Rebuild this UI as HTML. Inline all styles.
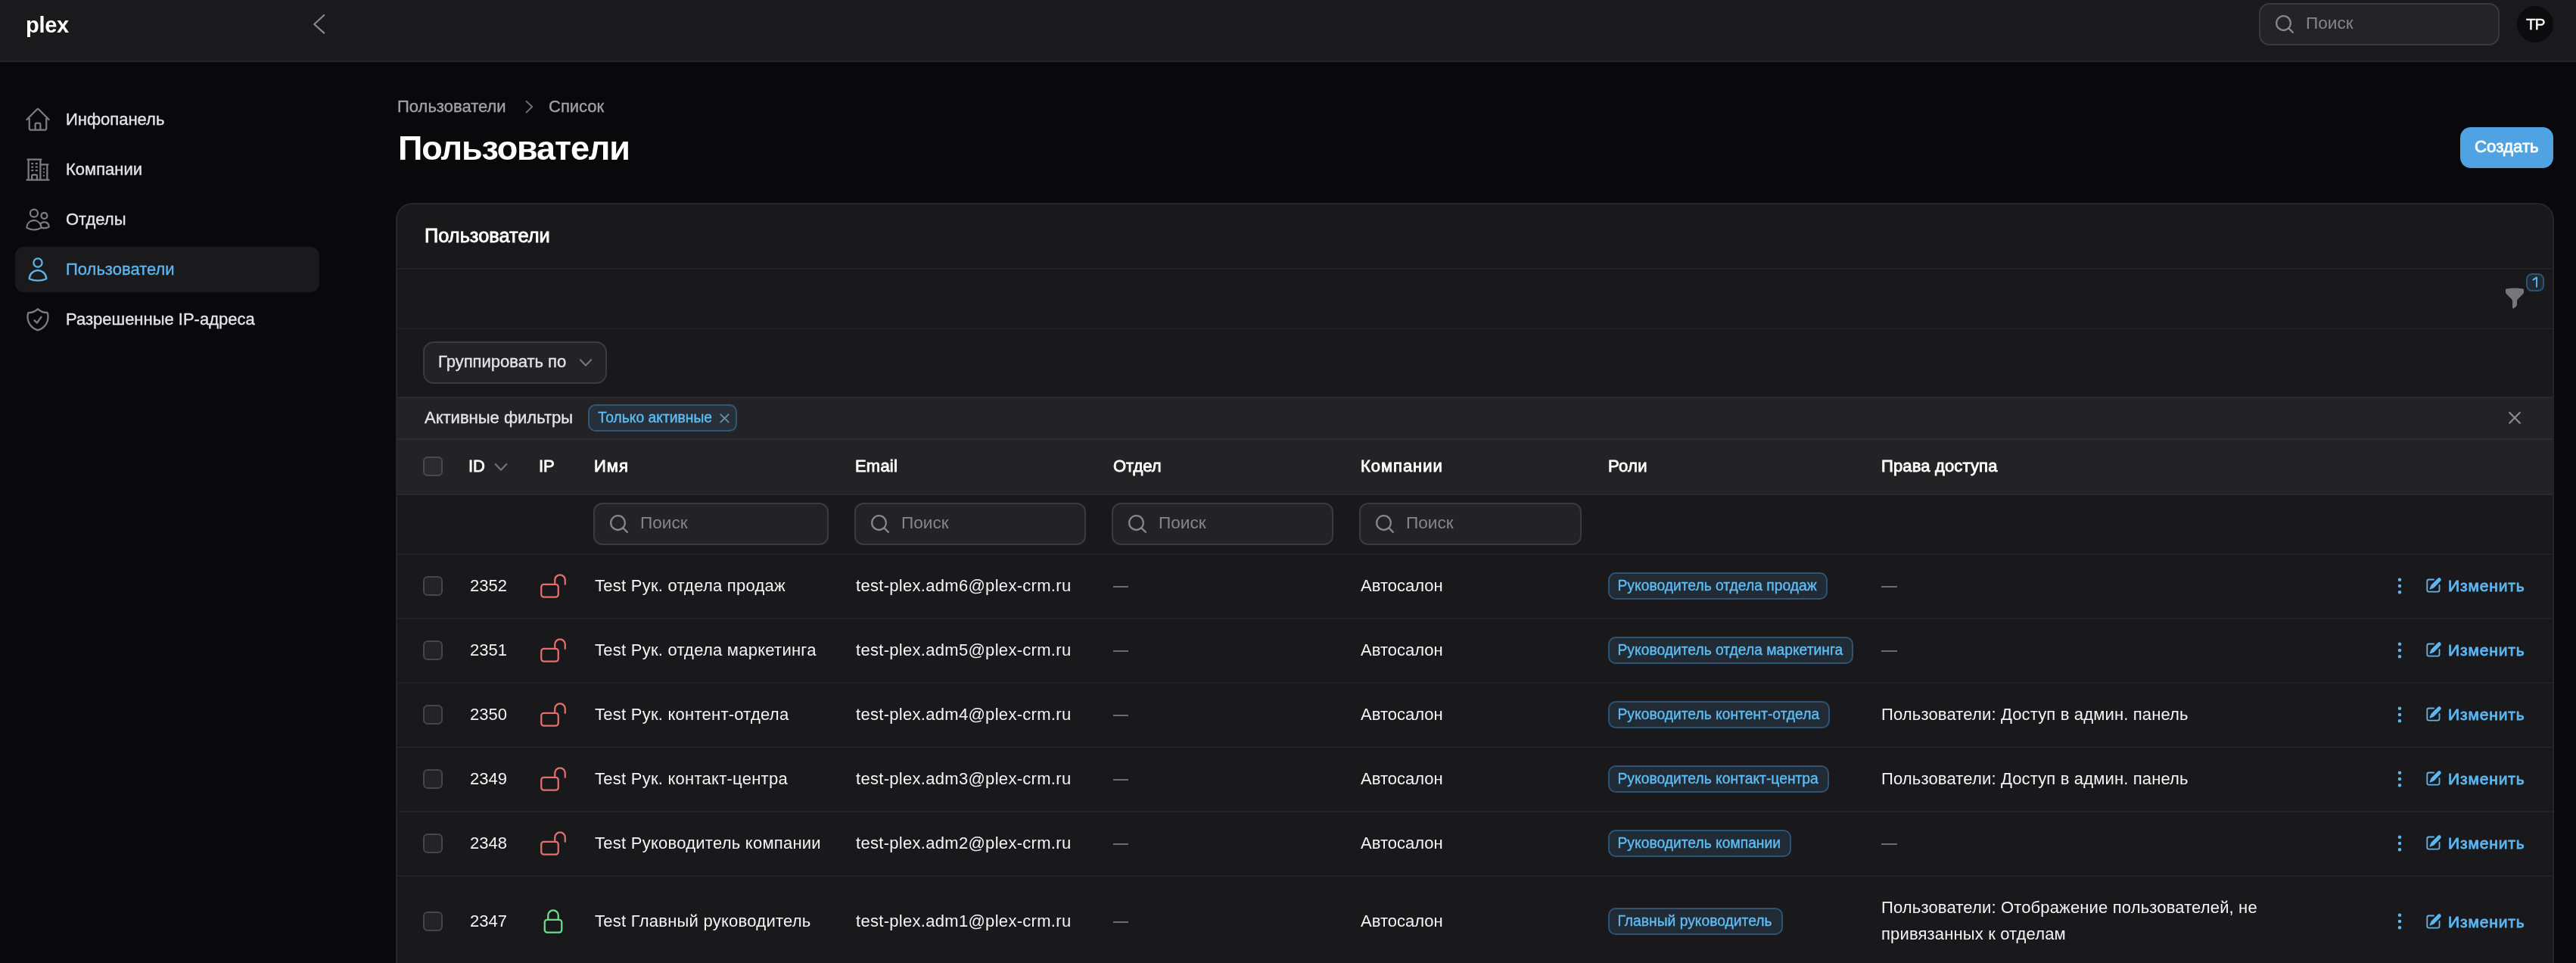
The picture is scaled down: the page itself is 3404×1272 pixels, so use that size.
<!DOCTYPE html><html><head><meta charset="utf-8"><title>Пользователи</title><style>
html,body{margin:0;padding:0;}body{width:3404px;height:1272px;overflow:hidden;position:relative;background:#09090b;font-family:"Liberation Sans", sans-serif;}
.t{position:absolute;white-space:nowrap;-webkit-font-smoothing:antialiased;will-change:transform;}.m{-webkit-text-stroke-width:0.35px}.sb{-webkit-text-stroke-width:0.8px}.r{position:absolute;box-sizing:border-box;}svg.r{overflow:visible}
</style></head><body>
<div class="r" style="left:0px;top:0px;width:3404.00px;height:80.00px;background:#1a1a1d;"></div>
<div class="r" style="left:0px;top:80px;width:3404.00px;height:2.00px;background:#232326;"></div>
<div class="t " style="left:34px;top:18.55px;font-size:29px;line-height:29px;color:#fff;font-weight:700;letter-spacing:-0.3px;">plex</div>
<svg class="r" style="left:390px;top:0px;" width="80" height="80" viewBox="0 0 80 80"><path d="M428.2 20 415.3 32 428.2 43.6" fill="none" stroke="#86868c" stroke-width="2.3" stroke-linecap="round" stroke-linejoin="round" transform="translate(-390 0)"/></svg>
<div class="r" style="left:2985px;top:4px;width:318.00px;height:56.00px;background:#242427;border:2px solid #3a3a3e;border-radius:14px;"></div>
<svg class="r" style="left:3004px;top:17px;" width="30" height="30" viewBox="0 0 20 20"><path d="M9 3.5a5.5 5.5 0 1 0 0 11 5.5 5.5 0 0 0 0-11ZM2 9a7 7 0 1 1 12.452 4.391l3.328 3.329a.75.75 0 1 1-1.06 1.06l-3.329-3.328A7 7 0 0 1 2 9Z" fill="#86868c" fill-rule="evenodd" clip-rule="evenodd"/></svg>
<div class="t " style="left:3046.8px;top:19.79px;font-size:22.6px;line-height:22.6px;color:#85858c;font-weight:400;">Поиск</div>
<div class="r" style="left:3326px;top:8px;width:48.00px;height:48.00px;background:#0c0c0e;border-radius:50%;"></div>
<div class="t m" style="left:3337.5px;top:21.05px;font-size:21px;line-height:21px;color:#fff;font-weight:400;letter-spacing:-1.3px;">TP</div>
<div class="r" style="left:20px;top:326px;width:402.00px;height:59.50px;background:#1a1a1d;border-radius:12px;"></div>
<svg class="r" style="left:32px;top:140.4px;" width="36" height="36" viewBox="0 0 24 24"><path d="m2.25 12 8.954-8.955c.44-.439 1.152-.439 1.591 0L21.75 12M4.5 9.75v10.125c0 .621.504 1.125 1.125 1.125H9.75v-4.875c0-.621.504-1.125 1.125-1.125h2.25c.621 0 1.125.504 1.125 1.125V21h4.125c.621 0 1.125-.504 1.125-1.125V9.75M8.25 21h8.25" fill="none" stroke="#7c7c82" stroke-width="1.5" stroke-linecap="round" stroke-linejoin="round"/></svg>
<div class="t m" style="left:86.9px;top:146.60px;font-size:22px;line-height:22px;color:#e4e4e7;font-weight:400;">Инфопанель</div>
<svg class="r" style="left:32px;top:206.4px;" width="36" height="36" viewBox="0 0 24 24"><path d="M2.25 21h19.5m-18-18v18m10.5-18v18m6-13.5V21M6.75 6.75h.75m-.75 3h.75m-.75 3h.75m3-6h.75m-.75 3h.75m-.75 3h.75M6.75 21v-3.375c0-.621.504-1.125 1.125-1.125h2.25c.621 0 1.125.504 1.125 1.125V21M3 3h12m-.75 4.5H21m-3.75 3.75h.008v.008h-.008v-.008Zm0 3h.008v.008h-.008v-.008Zm0 3h.008v.008h-.008v-.008Z" fill="none" stroke="#7c7c82" stroke-width="1.5" stroke-linecap="round" stroke-linejoin="round"/></svg>
<div class="t m" style="left:86.9px;top:212.60px;font-size:22px;line-height:22px;color:#e4e4e7;font-weight:400;">Компании</div>
<svg class="r" style="left:32px;top:272.4px;" width="36" height="36" viewBox="0 0 24 24"><path d="M15 19.128a9.38 9.38 0 0 0 2.625.372 9.337 9.337 0 0 0 4.121-.952 4.125 4.125 0 0 0-7.533-2.493M15 19.128v-.003c0-1.113-.285-2.16-.786-3.07M15 19.128v.106A12.318 12.318 0 0 1 8.624 21c-2.331 0-4.512-.645-6.374-1.766l-.001-.109a6.375 6.375 0 0 1 11.964-3.07M12 6.375a3.375 3.375 0 1 1-6.75 0 3.375 3.375 0 0 1 6.75 0Zm8.25 2.25a2.625 2.625 0 1 1-5.25 0 2.625 2.625 0 0 1 5.25 0Z" fill="none" stroke="#7c7c82" stroke-width="1.5" stroke-linecap="round" stroke-linejoin="round"/></svg>
<div class="t m" style="left:86.9px;top:278.60px;font-size:22px;line-height:22px;color:#e4e4e7;font-weight:400;">Отделы</div>
<svg class="r" style="left:32px;top:338.4px;" width="36" height="36" viewBox="0 0 24 24"><path d="M15.75 6a3.75 3.75 0 1 1-7.5 0 3.75 3.75 0 0 1 7.5 0ZM4.501 20.118a7.5 7.5 0 0 1 14.998 0A17.933 17.933 0 0 1 12 21.75c-2.676 0-5.216-.584-7.499-1.632Z" fill="none" stroke="#5cb6f2" stroke-width="1.5" stroke-linecap="round" stroke-linejoin="round"/></svg>
<div class="t m" style="left:86.9px;top:344.60px;font-size:22px;line-height:22px;color:#5cb6f2;font-weight:400;">Пользователи</div>
<svg class="r" style="left:32px;top:404.4px;" width="36" height="36" viewBox="0 0 24 24"><path d="M9 12.75 11.25 15 15 9.75m-3-7.036A11.959 11.959 0 0 1 3.598 6 11.99 11.99 0 0 0 3 9.749c0 5.592 3.824 10.29 9 11.623 5.176-1.332 9-6.03 9-11.622 0-1.31-.21-2.571-.598-3.751h-.152c-3.196 0-6.1-1.248-8.25-3.285Z" fill="none" stroke="#7c7c82" stroke-width="1.5" stroke-linecap="round" stroke-linejoin="round"/></svg>
<div class="t m" style="left:86.9px;top:410.60px;font-size:22px;line-height:22px;color:#e4e4e7;font-weight:400;">Разрешенные IP-адреса</div>
<div class="t m" style="left:524.8px;top:129.50px;font-size:22px;line-height:22px;color:#a1a1aa;font-weight:400;">Пользователи</div>
<svg class="r" style="left:690px;top:130px;" width="20" height="20" viewBox="0 0 20 20"><path d="M695.5 133.8 703.2 141.1 695.5 148.4" fill="none" stroke="#6e6e74" stroke-width="2" stroke-linecap="round" stroke-linejoin="round" transform="translate(-690 -130)"/></svg>
<div class="t m" style="left:725px;top:129.50px;font-size:22px;line-height:22px;color:#a1a1aa;font-weight:400;">Список</div>
<div class="t " style="left:526.2px;top:172.95px;font-size:45px;line-height:45px;color:#fff;font-weight:700;letter-spacing:-1.1px;">Пользователи</div>
<div class="r" style="left:3251px;top:168px;width:123.00px;height:54.00px;background:#4fa3e3;border-radius:14px;"></div>
<div class="t sb" style="left:3270px;top:183.04px;font-size:22.3px;line-height:22.3px;color:#fff;font-weight:400;">Создать</div>
<div class="r" style="left:523px;top:268px;width:2852.00px;height:1032.00px;background:#19191c;border:2px solid #262629;border-radius:22px;"></div>
<div class="t sb" style="left:561px;top:298.71px;font-size:25.4px;line-height:25.4px;color:#fff;font-weight:400;">Пользователи</div>
<div class="r" style="left:525px;top:353.5px;width:2848.00px;height:2.00px;background:#222225;"></div>
<svg class="r" style="left:3308px;top:379px;" width="30" height="30" viewBox="0 0 20 20"><path d="M2.628 1.601C5.028 1.206 7.49 1 10 1s4.973.206 7.372.601a.75.75 0 0 1 .628.74v2.288a2.25 2.25 0 0 1-.659 1.59l-4.682 4.683a2.25 2.25 0 0 0-.659 1.59v3.037c0 .684-.31 1.33-.844 1.757l-1.937 1.55A.75.75 0 0 1 8 18.25v-5.757a2.25 2.25 0 0 0-.659-1.591L2.659 6.22A2.25 2.25 0 0 1 2 4.629V2.34a.75.75 0 0 1 .628-.74Z" fill="#76767c" fill-rule="evenodd" clip-rule="evenodd"/></svg>
<div class="r" style="left:3338px;top:361px;width:24.00px;height:24.00px;background:#1e2a34;border:2px solid #2c5372;border-radius:8px;"></div>
<svg class="r" style="left:3340px;top:362px;" width="20" height="20" viewBox="0 0 20 20"><path d="M3352 378.8V366.4L3347.4 369.6" fill="none" stroke="#5cb6f2" stroke-width="1.9" stroke-linecap="round" stroke-linejoin="round" transform="translate(-3340 -362)"/></svg>
<div class="r" style="left:525px;top:432.5px;width:2848.00px;height:2.00px;background:#222225;"></div>
<div class="r" style="left:558.7px;top:450.8px;width:243.30px;height:56.50px;background:#232326;border:2px solid #3b3b3f;border-radius:14px;"></div>
<div class="t m" style="left:578.7px;top:467.10px;font-size:22px;line-height:22px;color:#e4e4e7;font-weight:400;">Группировать по</div>
<svg class="r" style="left:760px;top:470px;" width="20" height="20" viewBox="0 0 20 20"><path d="M766.8 475.2 774 482.8 781.2 475.2" fill="none" stroke="#76767c" stroke-width="2" stroke-linecap="round" stroke-linejoin="round" transform="translate(-760 -470)"/></svg>
<div class="r" style="left:525px;top:524px;width:2848.00px;height:2.00px;background:#29292c;"></div>
<div class="r" style="left:525px;top:526px;width:2848.00px;height:53.00px;background:#232326;"></div>
<div class="t m" style="left:560.6px;top:540.60px;font-size:22px;line-height:22px;color:#e4e4e7;font-weight:400;">Активные фильтры</div>
<div class="r" style="left:777.3px;top:534px;width:196.70px;height:36.00px;background:#25303a;border:2px solid #2f5878;border-radius:10px;"></div>
<div class="t m" style="left:789.5px;top:541.50px;font-size:19.3px;line-height:19.3px;color:#5fbdf5;font-weight:400;">Только активные</div>
<svg class="r" style="left:948px;top:543px;" width="20" height="20" viewBox="0 0 20 20"><path d="M952.3 547.3 962.7 557.7M962.7 547.3 952.3 557.7" fill="none" stroke="#6d8fa6" stroke-width="1.8" stroke-linecap="round" transform="translate(-948 -543)"/></svg>
<svg class="r" style="left:3310px;top:540px;" width="24" height="24" viewBox="0 0 24 24"><path d="M3316.2 545 3329.8 558.8M3329.8 545 3316.2 558.8" fill="none" stroke="#88888e" stroke-width="2.3" stroke-linecap="round" transform="translate(-3310 -540)"/></svg>
<div class="r" style="left:525px;top:578.5px;width:2848.00px;height:2.00px;background:#2d2d30;"></div>
<div class="r" style="left:525px;top:580.5px;width:2848.00px;height:71.50px;background:#232326;"></div>
<div class="r" style="left:558.6px;top:602.8px;width:26.60px;height:26.50px;background:#2c2c2f;border:2px solid #4a4a4e;border-radius:6px;"></div>
<div class="t sb" style="left:619.2px;top:604.80px;font-size:22px;line-height:22px;color:#fff;font-weight:400;">ID</div>
<div class="t sb" style="left:712.2px;top:604.80px;font-size:22px;line-height:22px;color:#fff;font-weight:400;">IP</div>
<div class="t sb" style="left:784.5px;top:604.80px;font-size:22px;line-height:22px;color:#fff;font-weight:400;letter-spacing:1.0px;">Имя</div>
<div class="t sb" style="left:1130px;top:604.80px;font-size:22px;line-height:22px;color:#fff;font-weight:400;letter-spacing:0.2px;">Email</div>
<div class="t sb" style="left:1471.1px;top:604.80px;font-size:22px;line-height:22px;color:#fff;font-weight:400;">Отдел</div>
<div class="t sb" style="left:1797.5px;top:604.80px;font-size:22px;line-height:22px;color:#fff;font-weight:400;letter-spacing:0.95px;">Компании</div>
<div class="t sb" style="left:2125px;top:604.80px;font-size:22px;line-height:22px;color:#fff;font-weight:400;letter-spacing:0.3px;">Роли</div>
<div class="t sb" style="left:2486px;top:604.80px;font-size:22px;line-height:22px;color:#fff;font-weight:400;letter-spacing:0.15px;">Права доступа</div>
<svg class="r" style="left:650px;top:608px;" width="24" height="24" viewBox="0 0 24 24"><path d="M654.6 613 662 620.8 669.4 613" fill="none" stroke="#76767c" stroke-width="2" stroke-linecap="round" stroke-linejoin="round" transform="translate(-650 -608)"/></svg>
<div class="r" style="left:525px;top:651.5px;width:2848.00px;height:2.00px;background:#29292c;"></div>
<div class="r" style="left:784px;top:664px;width:311.30px;height:56.10px;background:#232326;border:2px solid #3b3b3f;border-radius:12px;"></div>
<svg class="r" style="left:803px;top:677px;" width="30" height="30" viewBox="0 0 20 20"><path d="M9 3.5a5.5 5.5 0 1 0 0 11 5.5 5.5 0 0 0 0-11ZM2 9a7 7 0 1 1 12.452 4.391l3.328 3.329a.75.75 0 1 1-1.06 1.06l-3.329-3.328A7 7 0 0 1 2 9Z" fill="#86868c" fill-rule="evenodd" clip-rule="evenodd"/></svg>
<div class="t " style="left:846px;top:679.89px;font-size:22.6px;line-height:22.6px;color:#85858c;font-weight:400;">Поиск</div>
<div class="r" style="left:1128.8px;top:664px;width:306.00px;height:56.10px;background:#232326;border:2px solid #3b3b3f;border-radius:12px;"></div>
<svg class="r" style="left:1147.8px;top:677px;" width="30" height="30" viewBox="0 0 20 20"><path d="M9 3.5a5.5 5.5 0 1 0 0 11 5.5 5.5 0 0 0 0-11ZM2 9a7 7 0 1 1 12.452 4.391l3.328 3.329a.75.75 0 1 1-1.06 1.06l-3.329-3.328A7 7 0 0 1 2 9Z" fill="#86868c" fill-rule="evenodd" clip-rule="evenodd"/></svg>
<div class="t " style="left:1190.8px;top:679.89px;font-size:22.6px;line-height:22.6px;color:#85858c;font-weight:400;">Поиск</div>
<div class="r" style="left:1469px;top:664px;width:292.50px;height:56.10px;background:#232326;border:2px solid #3b3b3f;border-radius:12px;"></div>
<svg class="r" style="left:1488px;top:677px;" width="30" height="30" viewBox="0 0 20 20"><path d="M9 3.5a5.5 5.5 0 1 0 0 11 5.5 5.5 0 0 0 0-11ZM2 9a7 7 0 1 1 12.452 4.391l3.328 3.329a.75.75 0 1 1-1.06 1.06l-3.329-3.328A7 7 0 0 1 2 9Z" fill="#86868c" fill-rule="evenodd" clip-rule="evenodd"/></svg>
<div class="t " style="left:1531px;top:679.89px;font-size:22.6px;line-height:22.6px;color:#85858c;font-weight:400;">Поиск</div>
<div class="r" style="left:1795.6px;top:664px;width:294.60px;height:56.10px;background:#232326;border:2px solid #3b3b3f;border-radius:12px;"></div>
<svg class="r" style="left:1814.6px;top:677px;" width="30" height="30" viewBox="0 0 20 20"><path d="M9 3.5a5.5 5.5 0 1 0 0 11 5.5 5.5 0 0 0 0-11ZM2 9a7 7 0 1 1 12.452 4.391l3.328 3.329a.75.75 0 1 1-1.06 1.06l-3.329-3.328A7 7 0 0 1 2 9Z" fill="#86868c" fill-rule="evenodd" clip-rule="evenodd"/></svg>
<div class="t " style="left:1857.6px;top:679.89px;font-size:22.6px;line-height:22.6px;color:#85858c;font-weight:400;">Поиск</div>
<div class="r" style="left:525px;top:730.5px;width:2848.00px;height:2.00px;background:#222225;"></div>
<div class="r" style="left:558.8px;top:760.7px;width:26.00px;height:26.00px;background:#242427;border:2px solid #46464a;border-radius:6px;"></div>
<div class="t " style="left:620.7px;top:762.60px;font-size:22px;line-height:22px;color:#f4f4f5;font-weight:400;">2352</div>
<svg class="r" style="left:713px;top:755.7px;" width="36" height="36" viewBox="0 0 24 24"><path d="M13.5 10.5V6.75a4.5 4.5 0 1 1 9 0v3.75M3.75 21.75h10.5a2.25 2.25 0 0 0 2.25-2.25v-6.75a2.25 2.25 0 0 0-2.25-2.25H3.75a2.25 2.25 0 0 0-2.25 2.25v6.75a2.25 2.25 0 0 0 2.25 2.25Z" fill="none" stroke="#e3706f" stroke-width="1.5" stroke-linecap="round" stroke-linejoin="round"/></svg>
<div class="t " style="left:786.3px;top:762.60px;font-size:22px;line-height:22px;color:#f4f4f5;font-weight:400;letter-spacing:0.25px;">Test Рук. отдела продаж</div>
<div class="t " style="left:1131px;top:762.60px;font-size:22px;line-height:22px;color:#f4f4f5;font-weight:400;letter-spacing:0.3px;">test-plex.adm6@plex-crm.ru</div>
<div class="r" style="left:1470.6px;top:773.7px;width:20.60px;height:2.00px;background:#6b6b70;"></div>
<div class="t " style="left:1798px;top:762.60px;font-size:22px;line-height:22px;color:#f4f4f5;font-weight:400;">Автосалон</div>
<div class="r" style="left:2125.2px;top:755.90px;height:35.6px;padding:0 12px 0 10.5px;background:#202b35;border:2px solid #2e5373;border-radius:10px;font-size:19.3px;line-height:31.6px;color:#5fbdf5;white-space:nowrap;-webkit-text-stroke-width:0.35px;will-change:transform;">Руководитель отдела продаж</div>
<div class="r" style="left:2486.2px;top:773.7px;width:20.60px;height:2.00px;background:#6b6b70;"></div>
<svg class="r" style="left:3156px;top:758.7px;" width="30" height="30" viewBox="0 0 20 20"><path d="M10 3a1.5 1.5 0 1 1 0 3 1.5 1.5 0 0 1 0-3ZM10 8.5a1.5 1.5 0 1 1 0 3 1.5 1.5 0 0 1 0-3ZM11.5 15.5a1.5 1.5 0 1 0-3 0 1.5 1.5 0 0 0 3 0Z" fill="#5cb6f2" fill-rule="evenodd" clip-rule="evenodd"/></svg>
<svg class="r" style="left:3203.9px;top:761.3000000000001px;" width="24" height="24" viewBox="0 0 20 20"><path d="m5.433 13.917 1.262-3.155A4 4 0 0 1 7.58 9.42l6.92-6.918a2.121 2.121 0 0 1 3 3l-6.92 6.918c-.383.383-.84.685-1.343.886l-3.154 1.262a.5.5 0 0 1-.65-.65Z" fill="#5cb6f2"/><path d="M3.5 5.75c0-.69.56-1.25 1.25-1.25H10A.75.75 0 0 0 10 3H4.75A2.75 2.75 0 0 0 2 5.75v9.5A2.75 2.75 0 0 0 4.75 18h9.5A2.75 2.75 0 0 0 17 15.25V10a.75.75 0 0 0-1.5 0v5.25c0 .69-.56 1.25-1.25 1.25h-9.5c-.69 0-1.25-.56-1.25-1.25v-9.5Z" fill="#5cb6f2"/></svg>
<div class="t sb" style="left:3235px;top:763.45px;font-size:21px;line-height:21px;color:#5cb6f2;font-weight:400;letter-spacing:0.85px;">Изменить</div>
<div class="r" style="left:525px;top:815.5px;width:2848.00px;height:2.00px;background:#222225;"></div>
<div class="r" style="left:558.8px;top:845.7px;width:26.00px;height:26.00px;background:#242427;border:2px solid #46464a;border-radius:6px;"></div>
<div class="t " style="left:620.7px;top:847.60px;font-size:22px;line-height:22px;color:#f4f4f5;font-weight:400;">2351</div>
<svg class="r" style="left:713px;top:840.7px;" width="36" height="36" viewBox="0 0 24 24"><path d="M13.5 10.5V6.75a4.5 4.5 0 1 1 9 0v3.75M3.75 21.75h10.5a2.25 2.25 0 0 0 2.25-2.25v-6.75a2.25 2.25 0 0 0-2.25-2.25H3.75a2.25 2.25 0 0 0-2.25 2.25v6.75a2.25 2.25 0 0 0 2.25 2.25Z" fill="none" stroke="#e3706f" stroke-width="1.5" stroke-linecap="round" stroke-linejoin="round"/></svg>
<div class="t " style="left:786.3px;top:847.60px;font-size:22px;line-height:22px;color:#f4f4f5;font-weight:400;letter-spacing:0.25px;">Test Рук. отдела маркетинга</div>
<div class="t " style="left:1131px;top:847.60px;font-size:22px;line-height:22px;color:#f4f4f5;font-weight:400;letter-spacing:0.3px;">test-plex.adm5@plex-crm.ru</div>
<div class="r" style="left:1470.6px;top:858.7px;width:20.60px;height:2.00px;background:#6b6b70;"></div>
<div class="t " style="left:1798px;top:847.60px;font-size:22px;line-height:22px;color:#f4f4f5;font-weight:400;">Автосалон</div>
<div class="r" style="left:2125.2px;top:840.90px;height:35.6px;padding:0 12px 0 10.5px;background:#202b35;border:2px solid #2e5373;border-radius:10px;font-size:19.3px;line-height:31.6px;color:#5fbdf5;white-space:nowrap;-webkit-text-stroke-width:0.35px;will-change:transform;">Руководитель отдела маркетинга</div>
<div class="r" style="left:2486.2px;top:858.7px;width:20.60px;height:2.00px;background:#6b6b70;"></div>
<svg class="r" style="left:3156px;top:843.7px;" width="30" height="30" viewBox="0 0 20 20"><path d="M10 3a1.5 1.5 0 1 1 0 3 1.5 1.5 0 0 1 0-3ZM10 8.5a1.5 1.5 0 1 1 0 3 1.5 1.5 0 0 1 0-3ZM11.5 15.5a1.5 1.5 0 1 0-3 0 1.5 1.5 0 0 0 3 0Z" fill="#5cb6f2" fill-rule="evenodd" clip-rule="evenodd"/></svg>
<svg class="r" style="left:3203.9px;top:846.3000000000001px;" width="24" height="24" viewBox="0 0 20 20"><path d="m5.433 13.917 1.262-3.155A4 4 0 0 1 7.58 9.42l6.92-6.918a2.121 2.121 0 0 1 3 3l-6.92 6.918c-.383.383-.84.685-1.343.886l-3.154 1.262a.5.5 0 0 1-.65-.65Z" fill="#5cb6f2"/><path d="M3.5 5.75c0-.69.56-1.25 1.25-1.25H10A.75.75 0 0 0 10 3H4.75A2.75 2.75 0 0 0 2 5.75v9.5A2.75 2.75 0 0 0 4.75 18h9.5A2.75 2.75 0 0 0 17 15.25V10a.75.75 0 0 0-1.5 0v5.25c0 .69-.56 1.25-1.25 1.25h-9.5c-.69 0-1.25-.56-1.25-1.25v-9.5Z" fill="#5cb6f2"/></svg>
<div class="t sb" style="left:3235px;top:848.45px;font-size:21px;line-height:21px;color:#5cb6f2;font-weight:400;letter-spacing:0.85px;">Изменить</div>
<div class="r" style="left:525px;top:900.5px;width:2848.00px;height:2.00px;background:#222225;"></div>
<div class="r" style="left:558.8px;top:930.7px;width:26.00px;height:26.00px;background:#242427;border:2px solid #46464a;border-radius:6px;"></div>
<div class="t " style="left:620.7px;top:932.60px;font-size:22px;line-height:22px;color:#f4f4f5;font-weight:400;">2350</div>
<svg class="r" style="left:713px;top:925.7px;" width="36" height="36" viewBox="0 0 24 24"><path d="M13.5 10.5V6.75a4.5 4.5 0 1 1 9 0v3.75M3.75 21.75h10.5a2.25 2.25 0 0 0 2.25-2.25v-6.75a2.25 2.25 0 0 0-2.25-2.25H3.75a2.25 2.25 0 0 0-2.25 2.25v6.75a2.25 2.25 0 0 0 2.25 2.25Z" fill="none" stroke="#e3706f" stroke-width="1.5" stroke-linecap="round" stroke-linejoin="round"/></svg>
<div class="t " style="left:786.3px;top:932.60px;font-size:22px;line-height:22px;color:#f4f4f5;font-weight:400;letter-spacing:0.25px;">Test Рук. контент-отдела</div>
<div class="t " style="left:1131px;top:932.60px;font-size:22px;line-height:22px;color:#f4f4f5;font-weight:400;letter-spacing:0.3px;">test-plex.adm4@plex-crm.ru</div>
<div class="r" style="left:1470.6px;top:943.7px;width:20.60px;height:2.00px;background:#6b6b70;"></div>
<div class="t " style="left:1798px;top:932.60px;font-size:22px;line-height:22px;color:#f4f4f5;font-weight:400;">Автосалон</div>
<div class="r" style="left:2125.2px;top:925.90px;height:35.6px;padding:0 12px 0 10.5px;background:#202b35;border:2px solid #2e5373;border-radius:10px;font-size:19.3px;line-height:31.6px;color:#5fbdf5;white-space:nowrap;-webkit-text-stroke-width:0.35px;will-change:transform;">Руководитель контент-отдела</div>
<div class="t " style="left:2486.2px;top:932.60px;font-size:22px;line-height:22px;color:#f4f4f5;font-weight:400;letter-spacing:0.15px;">Пользователи: Доступ в админ. панель</div>
<svg class="r" style="left:3156px;top:928.7px;" width="30" height="30" viewBox="0 0 20 20"><path d="M10 3a1.5 1.5 0 1 1 0 3 1.5 1.5 0 0 1 0-3ZM10 8.5a1.5 1.5 0 1 1 0 3 1.5 1.5 0 0 1 0-3ZM11.5 15.5a1.5 1.5 0 1 0-3 0 1.5 1.5 0 0 0 3 0Z" fill="#5cb6f2" fill-rule="evenodd" clip-rule="evenodd"/></svg>
<svg class="r" style="left:3203.9px;top:931.3000000000001px;" width="24" height="24" viewBox="0 0 20 20"><path d="m5.433 13.917 1.262-3.155A4 4 0 0 1 7.58 9.42l6.92-6.918a2.121 2.121 0 0 1 3 3l-6.92 6.918c-.383.383-.84.685-1.343.886l-3.154 1.262a.5.5 0 0 1-.65-.65Z" fill="#5cb6f2"/><path d="M3.5 5.75c0-.69.56-1.25 1.25-1.25H10A.75.75 0 0 0 10 3H4.75A2.75 2.75 0 0 0 2 5.75v9.5A2.75 2.75 0 0 0 4.75 18h9.5A2.75 2.75 0 0 0 17 15.25V10a.75.75 0 0 0-1.5 0v5.25c0 .69-.56 1.25-1.25 1.25h-9.5c-.69 0-1.25-.56-1.25-1.25v-9.5Z" fill="#5cb6f2"/></svg>
<div class="t sb" style="left:3235px;top:933.45px;font-size:21px;line-height:21px;color:#5cb6f2;font-weight:400;letter-spacing:0.85px;">Изменить</div>
<div class="r" style="left:525px;top:985.5px;width:2848.00px;height:2.00px;background:#222225;"></div>
<div class="r" style="left:558.8px;top:1015.7px;width:26.00px;height:26.00px;background:#242427;border:2px solid #46464a;border-radius:6px;"></div>
<div class="t " style="left:620.7px;top:1017.60px;font-size:22px;line-height:22px;color:#f4f4f5;font-weight:400;">2349</div>
<svg class="r" style="left:713px;top:1010.7px;" width="36" height="36" viewBox="0 0 24 24"><path d="M13.5 10.5V6.75a4.5 4.5 0 1 1 9 0v3.75M3.75 21.75h10.5a2.25 2.25 0 0 0 2.25-2.25v-6.75a2.25 2.25 0 0 0-2.25-2.25H3.75a2.25 2.25 0 0 0-2.25 2.25v6.75a2.25 2.25 0 0 0 2.25 2.25Z" fill="none" stroke="#e3706f" stroke-width="1.5" stroke-linecap="round" stroke-linejoin="round"/></svg>
<div class="t " style="left:786.3px;top:1017.60px;font-size:22px;line-height:22px;color:#f4f4f5;font-weight:400;letter-spacing:0.25px;">Test Рук. контакт-центра</div>
<div class="t " style="left:1131px;top:1017.60px;font-size:22px;line-height:22px;color:#f4f4f5;font-weight:400;letter-spacing:0.3px;">test-plex.adm3@plex-crm.ru</div>
<div class="r" style="left:1470.6px;top:1028.7px;width:20.60px;height:2.00px;background:#6b6b70;"></div>
<div class="t " style="left:1798px;top:1017.60px;font-size:22px;line-height:22px;color:#f4f4f5;font-weight:400;">Автосалон</div>
<div class="r" style="left:2125.2px;top:1010.90px;height:35.6px;padding:0 12px 0 10.5px;background:#202b35;border:2px solid #2e5373;border-radius:10px;font-size:19.3px;line-height:31.6px;color:#5fbdf5;white-space:nowrap;-webkit-text-stroke-width:0.35px;will-change:transform;">Руководитель контакт-центра</div>
<div class="t " style="left:2486.2px;top:1017.60px;font-size:22px;line-height:22px;color:#f4f4f5;font-weight:400;letter-spacing:0.15px;">Пользователи: Доступ в админ. панель</div>
<svg class="r" style="left:3156px;top:1013.7px;" width="30" height="30" viewBox="0 0 20 20"><path d="M10 3a1.5 1.5 0 1 1 0 3 1.5 1.5 0 0 1 0-3ZM10 8.5a1.5 1.5 0 1 1 0 3 1.5 1.5 0 0 1 0-3ZM11.5 15.5a1.5 1.5 0 1 0-3 0 1.5 1.5 0 0 0 3 0Z" fill="#5cb6f2" fill-rule="evenodd" clip-rule="evenodd"/></svg>
<svg class="r" style="left:3203.9px;top:1016.3000000000001px;" width="24" height="24" viewBox="0 0 20 20"><path d="m5.433 13.917 1.262-3.155A4 4 0 0 1 7.58 9.42l6.92-6.918a2.121 2.121 0 0 1 3 3l-6.92 6.918c-.383.383-.84.685-1.343.886l-3.154 1.262a.5.5 0 0 1-.65-.65Z" fill="#5cb6f2"/><path d="M3.5 5.75c0-.69.56-1.25 1.25-1.25H10A.75.75 0 0 0 10 3H4.75A2.75 2.75 0 0 0 2 5.75v9.5A2.75 2.75 0 0 0 4.75 18h9.5A2.75 2.75 0 0 0 17 15.25V10a.75.75 0 0 0-1.5 0v5.25c0 .69-.56 1.25-1.25 1.25h-9.5c-.69 0-1.25-.56-1.25-1.25v-9.5Z" fill="#5cb6f2"/></svg>
<div class="t sb" style="left:3235px;top:1018.45px;font-size:21px;line-height:21px;color:#5cb6f2;font-weight:400;letter-spacing:0.85px;">Изменить</div>
<div class="r" style="left:525px;top:1070.5px;width:2848.00px;height:2.00px;background:#222225;"></div>
<div class="r" style="left:558.8px;top:1100.7px;width:26.00px;height:26.00px;background:#242427;border:2px solid #46464a;border-radius:6px;"></div>
<div class="t " style="left:620.7px;top:1102.60px;font-size:22px;line-height:22px;color:#f4f4f5;font-weight:400;">2348</div>
<svg class="r" style="left:713px;top:1095.7px;" width="36" height="36" viewBox="0 0 24 24"><path d="M13.5 10.5V6.75a4.5 4.5 0 1 1 9 0v3.75M3.75 21.75h10.5a2.25 2.25 0 0 0 2.25-2.25v-6.75a2.25 2.25 0 0 0-2.25-2.25H3.75a2.25 2.25 0 0 0-2.25 2.25v6.75a2.25 2.25 0 0 0 2.25 2.25Z" fill="none" stroke="#e3706f" stroke-width="1.5" stroke-linecap="round" stroke-linejoin="round"/></svg>
<div class="t " style="left:786.3px;top:1102.60px;font-size:22px;line-height:22px;color:#f4f4f5;font-weight:400;letter-spacing:0.25px;">Test Руководитель компании</div>
<div class="t " style="left:1131px;top:1102.60px;font-size:22px;line-height:22px;color:#f4f4f5;font-weight:400;letter-spacing:0.3px;">test-plex.adm2@plex-crm.ru</div>
<div class="r" style="left:1470.6px;top:1113.7px;width:20.60px;height:2.00px;background:#6b6b70;"></div>
<div class="t " style="left:1798px;top:1102.60px;font-size:22px;line-height:22px;color:#f4f4f5;font-weight:400;">Автосалон</div>
<div class="r" style="left:2125.2px;top:1095.90px;height:35.6px;padding:0 12px 0 10.5px;background:#202b35;border:2px solid #2e5373;border-radius:10px;font-size:19.3px;line-height:31.6px;color:#5fbdf5;white-space:nowrap;-webkit-text-stroke-width:0.35px;will-change:transform;">Руководитель компании</div>
<div class="r" style="left:2486.2px;top:1113.7px;width:20.60px;height:2.00px;background:#6b6b70;"></div>
<svg class="r" style="left:3156px;top:1098.7px;" width="30" height="30" viewBox="0 0 20 20"><path d="M10 3a1.5 1.5 0 1 1 0 3 1.5 1.5 0 0 1 0-3ZM10 8.5a1.5 1.5 0 1 1 0 3 1.5 1.5 0 0 1 0-3ZM11.5 15.5a1.5 1.5 0 1 0-3 0 1.5 1.5 0 0 0 3 0Z" fill="#5cb6f2" fill-rule="evenodd" clip-rule="evenodd"/></svg>
<svg class="r" style="left:3203.9px;top:1101.3px;" width="24" height="24" viewBox="0 0 20 20"><path d="m5.433 13.917 1.262-3.155A4 4 0 0 1 7.58 9.42l6.92-6.918a2.121 2.121 0 0 1 3 3l-6.92 6.918c-.383.383-.84.685-1.343.886l-3.154 1.262a.5.5 0 0 1-.65-.65Z" fill="#5cb6f2"/><path d="M3.5 5.75c0-.69.56-1.25 1.25-1.25H10A.75.75 0 0 0 10 3H4.75A2.75 2.75 0 0 0 2 5.75v9.5A2.75 2.75 0 0 0 4.75 18h9.5A2.75 2.75 0 0 0 17 15.25V10a.75.75 0 0 0-1.5 0v5.25c0 .69-.56 1.25-1.25 1.25h-9.5c-.69 0-1.25-.56-1.25-1.25v-9.5Z" fill="#5cb6f2"/></svg>
<div class="t sb" style="left:3235px;top:1103.45px;font-size:21px;line-height:21px;color:#5cb6f2;font-weight:400;letter-spacing:0.85px;">Изменить</div>
<div class="r" style="left:525px;top:1155.5px;width:2848.00px;height:2.00px;background:#222225;"></div>
<div class="r" style="left:558.8px;top:1204px;width:26.00px;height:26.00px;background:#242427;border:2px solid #46464a;border-radius:6px;"></div>
<div class="t " style="left:620.7px;top:1205.90px;font-size:22px;line-height:22px;color:#f4f4f5;font-weight:400;">2347</div>
<svg class="r" style="left:713px;top:1199px;" width="36" height="36" viewBox="0 0 24 24"><path d="M16.5 10.5V6.75a4.5 4.5 0 1 0-9 0v3.75m-.75 11.25h10.5a2.25 2.25 0 0 0 2.25-2.25v-6.75a2.25 2.25 0 0 0-2.25-2.25H6.75a2.25 2.25 0 0 0-2.25 2.25v6.75a2.25 2.25 0 0 0 2.25 2.25Z" fill="none" stroke="#6fdc8c" stroke-width="1.5" stroke-linecap="round" stroke-linejoin="round"/></svg>
<div class="t " style="left:786.3px;top:1205.90px;font-size:22px;line-height:22px;color:#f4f4f5;font-weight:400;letter-spacing:0.25px;">Test Главный руководитель</div>
<div class="t " style="left:1131px;top:1205.90px;font-size:22px;line-height:22px;color:#f4f4f5;font-weight:400;letter-spacing:0.3px;">test-plex.adm1@plex-crm.ru</div>
<div class="r" style="left:1470.6px;top:1217px;width:20.60px;height:2.00px;background:#6b6b70;"></div>
<div class="t " style="left:1798px;top:1205.90px;font-size:22px;line-height:22px;color:#f4f4f5;font-weight:400;">Автосалон</div>
<div class="r" style="left:2125.2px;top:1199.20px;height:35.6px;padding:0 12px 0 10.5px;background:#202b35;border:2px solid #2e5373;border-radius:10px;font-size:19.3px;line-height:31.6px;color:#5fbdf5;white-space:nowrap;-webkit-text-stroke-width:0.35px;will-change:transform;">Главный руководитель</div>
<div class="t " style="left:2486.2px;top:1187.80px;font-size:22px;line-height:22px;color:#f4f4f5;font-weight:400;letter-spacing:0.15px;">Пользователи: Отображение пользователей, не</div>
<div class="t " style="left:2486.2px;top:1223.40px;font-size:22px;line-height:22px;color:#f4f4f5;font-weight:400;letter-spacing:0.15px;">привязанных к отделам</div>
<svg class="r" style="left:3156px;top:1202px;" width="30" height="30" viewBox="0 0 20 20"><path d="M10 3a1.5 1.5 0 1 1 0 3 1.5 1.5 0 0 1 0-3ZM10 8.5a1.5 1.5 0 1 1 0 3 1.5 1.5 0 0 1 0-3ZM11.5 15.5a1.5 1.5 0 1 0-3 0 1.5 1.5 0 0 0 3 0Z" fill="#5cb6f2" fill-rule="evenodd" clip-rule="evenodd"/></svg>
<svg class="r" style="left:3203.9px;top:1204.6px;" width="24" height="24" viewBox="0 0 20 20"><path d="m5.433 13.917 1.262-3.155A4 4 0 0 1 7.58 9.42l6.92-6.918a2.121 2.121 0 0 1 3 3l-6.92 6.918c-.383.383-.84.685-1.343.886l-3.154 1.262a.5.5 0 0 1-.65-.65Z" fill="#5cb6f2"/><path d="M3.5 5.75c0-.69.56-1.25 1.25-1.25H10A.75.75 0 0 0 10 3H4.75A2.75 2.75 0 0 0 2 5.75v9.5A2.75 2.75 0 0 0 4.75 18h9.5A2.75 2.75 0 0 0 17 15.25V10a.75.75 0 0 0-1.5 0v5.25c0 .69-.56 1.25-1.25 1.25h-9.5c-.69 0-1.25-.56-1.25-1.25v-9.5Z" fill="#5cb6f2"/></svg>
<div class="t sb" style="left:3235px;top:1206.75px;font-size:21px;line-height:21px;color:#5cb6f2;font-weight:400;letter-spacing:0.85px;">Изменить</div>
</body></html>
